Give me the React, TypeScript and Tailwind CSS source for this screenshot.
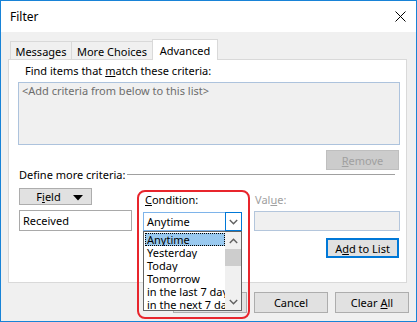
import React from "react";

function Chevron({ dir, className }: { dir: "up" | "down"; className?: string }) {
  return (
    <svg width="9" height="6" viewBox="0 0 9 6" className={className}>
      {dir === "down" ? (
        <polyline points="0.8,1 4.5,4.7 8.2,1" fill="none" stroke="#606060" strokeWidth="1.4" />
      ) : (
        <polyline points="0.8,5 4.5,1.3 8.2,5" fill="none" stroke="#606060" strokeWidth="1.4" />
      )}
    </svg>
  );
}

function Btn({ children, className = "" }: { children: React.ReactNode; className?: string }) {
  return (
    <div
      className={
        "flex items-center justify-center border border-[#adadad] bg-[#e1e1e1] text-[11px] leading-none text-black " +
        className
      }
    >
      {children}
    </div>
  );
}

export default function App() {
  const items = ["Anytime", "Yesterday", "Today", "Tomorrow", "in the last 7 days", "in the next 7 days"];
  return (
    <div className="w-[417px] h-[322px] border border-[#1883d7] bg-[#f0f0f0] flex flex-col overflow-hidden font-['Noto_Sans',sans-serif] text-[11px] text-black">
      {/* Title bar */}
      <div className="h-[31px] bg-white flex items-center justify-between pl-[9px] pr-[10px] shrink-0">
        <span className="text-[12px] leading-none">Filter</span>
        <svg width="11" height="11" viewBox="0 0 11 11">
          <line x1="0.5" y1="0.5" x2="10.5" y2="10.5" stroke="#000" strokeWidth="1" />
          <line x1="10.5" y1="0.5" x2="0.5" y2="10.5" stroke="#000" strokeWidth="1" />
        </svg>
      </div>

      {/* Body */}
      <div className="flex-1 flex flex-col px-[7px] pt-[7px]">
        {/* Tabs */}
        <div className="flex items-end pl-[2px] h-[21px] mb-[-1px] relative z-[1]">
          <div className="w-[62px] h-[18px] mb-px border-l border-t border-r border-[#d9d9d9] bg-[#f0f0f0] flex items-center justify-center pt-[2px] leading-none">
            Messages
          </div>
          <div className="w-[81px] h-[18px] mb-px border-t border-r border-[#d9d9d9] bg-[#f0f0f0] flex items-center justify-center pt-[2px] leading-none">
            More Choices
          </div>
          <div className="w-[66px] h-[21px] ml-[-1px] border-l border-t border-r border-[#d9d9d9] bg-white flex items-center justify-center leading-none">
            Advanced
          </div>
        </div>

        {/* Panel */}
        <div className="w-[399px] h-[224px] border border-[#d9d9d9] bg-white relative shrink-0 flex flex-col pl-[9px]">
          <div className="ml-[7px] mt-[3px] leading-[16px]">
            Find items that <span className="underline">m</span>atch these criteria:
          </div>
          <div className="mt-[3px] w-[382px] h-[63px] border border-[#adc3dd] bg-[#f0f0f0] pl-[3px] leading-[15px] text-[#6d6d6d]">
            &lt;Add criteria from below to this list&gt;
          </div>
          <div className="w-[382px] flex justify-end mt-[5px]">
            <div className="w-[73px] h-[20px] mr-[1px] border border-[#bfbfbf] bg-[#cccccc] flex items-center justify-center leading-none text-[#a0a0a0]">
              <span className="underline">R</span>emove
            </div>
          </div>
          <div className="w-[382px] flex items-center h-[10px] mt-[-1px] pl-px pr-[5px]">
            <span className="leading-none whitespace-nowrap">Define more criteria:</span>
            <div className="flex-1 h-px bg-[#a0a0a0] ml-[2px]" />
          </div>

          {/* Lower section */}
          <div className="flex mt-[9px]">
            {/* Column 1 */}
            <div className="w-[113px] ml-px flex flex-col">
              <Btn className="w-[73px] h-[17px] relative">
                <span className="mr-[14px]">
                  F<span className="underline">i</span>eld
                </span>
                <svg width="10" height="6" viewBox="0 0 10 6" className="absolute right-[8px] top-[6px]">
                  <polygon points="0,0 10,0 5,5.5" fill="#000" />
                </svg>
              </Btn>
              <div className="mt-[5px] h-[21px] border border-[#a9a9a9] bg-white flex items-center pl-[3px] leading-none">
                Received
              </div>
            </div>

            {/* Column 2 - Condition */}
            <div className="w-[99px] ml-[11px] flex flex-col relative">
              <div className="mt-[4px] pl-[2px] leading-[16px]">
                <span className="underline">C</span>ondition:
              </div>
              <div className="mt-[4px] h-[19px] border border-[#7eb4ea] bg-white flex items-center relative">
                <span className="pl-[3px] leading-none">Anytime</span>
                <div className="absolute right-[-1px] top-[-1px] w-[17px] h-[19px] border border-[#0078d7] bg-white flex items-center justify-center">
                  <Chevron dir="down" />
                </div>
                {/* Dropdown list */}
                <div className="absolute left-[-1px] top-[18px] w-[99px] h-[80px] border border-[#646464] bg-white z-20 p-px">
                  <div className="w-[80px] flex flex-col">
                    {items.map((it, i) => (
                      <div
                        key={it}
                        className={
                          "h-[13px] leading-[13px] pl-[2px] whitespace-nowrap overflow-hidden " +
                          (i === 0 ? "bg-[#99c9ef] outline outline-1 outline-dotted outline-offset-[-1px] outline-black" : "")
                        }
                      >
                        {it}
                      </div>
                    ))}
                  </div>
                  <div className="absolute right-0 top-0 w-[16px] h-[78px] bg-[#f0f0f0] flex flex-col items-center">
                    <div className="h-[17px] flex items-center justify-center">
                      <Chevron dir="up" />
                    </div>
                    <div className="w-[16px] h-[17px] bg-[#cdcdcd]" />
                    <div className="flex-1" />
                    <div className="h-[16px] flex items-center justify-center">
                      <Chevron dir="down" />
                    </div>
                  </div>
                </div>
              </div>
              {/* Red highlight annotation */}
              <div className="absolute left-[-6px] top-[2px] w-[113px] h-[129px] border-2 border-[#e8252c] rounded-[8px] z-30 pointer-events-none" />
            </div>

            {/* Column 3 - Value */}
            <div className="w-[146px] ml-[12px] flex flex-col">
              <div className="mt-[4px] pl-px leading-[16px] text-[#a0a0a0]">
                Val<span className="underline">u</span>e:
              </div>
              <div className="mt-[3px] h-[20px] border border-[#b4c6dc] bg-[#f0f0f0]" />
              <div className="flex justify-end mt-[7px]">
                <div className="w-[73px] h-[20px] mr-px border-2 border-[#0078d7] bg-[#e1e1e1] flex items-center justify-center leading-none">
                  A<span className="underline">d</span>d to List
                </div>
              </div>
            </div>
          </div>
        </div>

        {/* Bottom buttons */}
        <div className="flex justify-end gap-[7px] mt-[9px]">
          <Btn className="w-[74px] h-[21px]">OK</Btn>
          <Btn className="w-[74px] h-[21px]">Cancel</Btn>
          <Btn className="w-[74px] h-[21px]">
            Clear <span className="underline ml-[3px]">A</span>ll
          </Btn>
        </div>
      </div>
    </div>
  );
}
